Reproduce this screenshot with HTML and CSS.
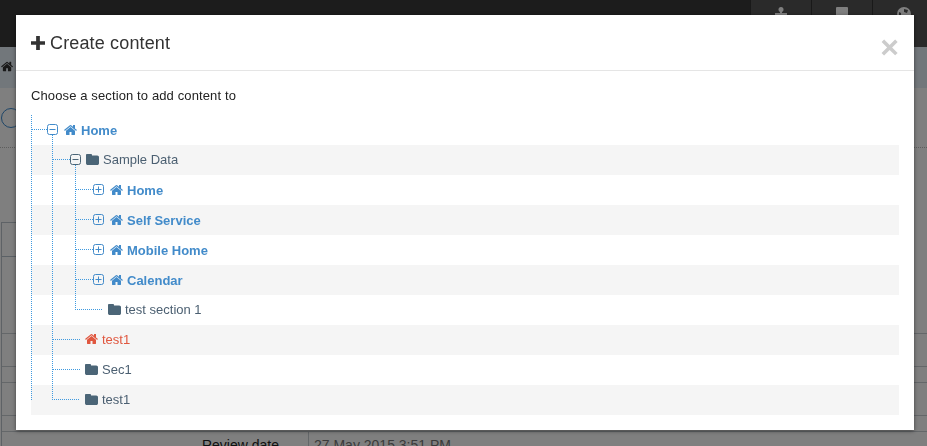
FILE: index.html
```html
<!doctype html>
<html lang="en">
  <head>
    <meta charset="UTF-8" />
    <meta name="viewport" content="width=device-width, initial-scale=1.0" />
    <title>Create content</title>
    <link rel="stylesheet" href="styles.css">
  </head>
  <body>
    <svg class="icon-defs" width="0" height="0">
      <symbol id="i-home" viewBox="0 0 1792 1792"><path d="M1408 992v480q0 26-19 45t-45 19h-384v-384h-256v384h-384q-26 0-45-19t-19-45v-480q0-1 .5-3t.5-3l575-474 575 474q1 2 1 6zm223-69l-62 74q-8 9-21 11h-3q-13 0-21-7l-692-577-692 577q-12 8-24 7-13-2-21-11l-62-74q-8-10-7-23.5t11-22.5l719-599q32-26 76-26t76 26l244 204v-195q0-14 9-23t23-9h192q14 0 23 9t9 23v408l219 182q10 8 11 21.5t-7 23.5z"/></symbol>
      <symbol id="i-folder" viewBox="64 192 1664 1344" preserveAspectRatio="none"><path d="M1728 608v704q0 92-66 158t-158 66h-1216q-92 0-158-66t-66-158v-960q0-92 66-158t158-66h320q92 0 158 66t66 158v32h672q92 0 158 66t66 158z"/></symbol>
      <symbol id="i-minus" viewBox="0 0 11 11"><rect x=".5" y=".5" width="10" height="10" rx="2" fill="none" stroke="currentColor"/><path d="M2.5 5.5h6" stroke="currentColor"/></symbol>
      <symbol id="i-plus" viewBox="0 0 11 11"><rect x=".5" y=".5" width="10" height="10" rx="2" fill="none" stroke="currentColor"/><path d="M2.5 5.5h6M5.5 2.5v6" stroke="currentColor"/></symbol>
    </svg>

    <!-- page behind the dialog -->
    <div class="page">
      <nav class="navbar">
        <div class="nav-item">
          <svg viewBox="0 0 16 16" width="16" height="16"><circle cx="8" cy="3.5" r="2.5"/><rect x="7" y="5" width="2" height="3"/><rect x="2" y="7" width="12" height="8"/></svg>
        </div>
        <div class="nav-item">
          <svg viewBox="0 0 16 16" width="16" height="16"><rect x="2" y="1" width="12" height="14" rx="1"/></svg>
        </div>
        <div class="nav-item">
          <svg viewBox="0 0 16 16" width="16" height="16"><circle cx="8" cy="8" r="7"/><path class="globe-mark" d="M8 3l4 1-1 3-3-1zM3 6l2 1v2L3 9z"/></svg>
        </div>
      </nav>
      <div class="crumbs">
        <svg class="crumb-home"><use href="#i-home"/></svg>
      </div>
      <div class="page-title"><span class="title-ring"></span></div>
      <div class="panel">
        <div class="panel-tab"></div>
        <div class="panel-row r2"></div>
        <div class="panel-row r3"></div>
        <div class="panel-row r4"></div>
        <div class="panel-row r5"></div>
        <div class="panel-row r6"></div>
        <div class="review">
          <span class="review-label">Review date</span>
          <span class="review-value">27 May 2015 3:51 PM</span>
        </div>
      </div>
    </div>

    <div class="backdrop"></div>

    <div class="modal">
      <header class="modal-header">
        <h4 class="modal-title">
          <svg class="plus-icon" viewBox="0 0 15 15"><path d="M5.5 0h4v5.5H15v4H9.5V15h-4V9.5H0v-4h5.5z"/></svg>
          Create content
        </h4>
        <span class="close">&times;</span>
      </header>
      <div class="modal-body">
        <p class="intro">Choose a section to add content to</p>
        <div class="tree">
          <svg class="tree-lines" width="120" height="300">
            <path d="M.5 0V285M.5 14.5H16M21.5 20V284.5H49M21.5 44.5H39M44.5 50V194.5H72M44.5 74.5H62M44.5 104.5H62M44.5 134.5H62M44.5 164.5H62M21.5 224.5H49M21.5 254.5H49"/>
          </svg>
          <div class="row lvl-1 link"><svg class="toggle"><use href="#i-minus"/></svg><svg class="icon"><use href="#i-home"/></svg><b>Home</b></div>
          <div class="row lvl-2 alt"><svg class="toggle dark"><use href="#i-minus"/></svg><svg class="icon folder"><use href="#i-folder"/></svg>Sample Data</div>
          <div class="row lvl-3 link"><svg class="toggle"><use href="#i-plus"/></svg><svg class="icon"><use href="#i-home"/></svg><b>Home</b></div>
          <div class="row lvl-3 link alt"><svg class="toggle"><use href="#i-plus"/></svg><svg class="icon"><use href="#i-home"/></svg><b>Self Service</b></div>
          <div class="row lvl-3 link"><svg class="toggle"><use href="#i-plus"/></svg><svg class="icon"><use href="#i-home"/></svg><b>Mobile Home</b></div>
          <div class="row lvl-3 link alt"><svg class="toggle"><use href="#i-plus"/></svg><svg class="icon"><use href="#i-home"/></svg><b>Calendar</b></div>
          <div class="row lvl-3-leaf"><svg class="icon folder"><use href="#i-folder"/></svg>test section 1</div>
          <div class="row lvl-2-leaf alt danger"><svg class="icon"><use href="#i-home"/></svg>test1</div>
          <div class="row lvl-2-leaf"><svg class="icon folder"><use href="#i-folder"/></svg>Sec1</div>
          <div class="row lvl-2-leaf alt"><svg class="icon folder"><use href="#i-folder"/></svg>test1</div>
        </div>
      </div>
    </div>
  </body>
</html>
```

FILE: styles.css
```css
* {
  margin: 0;
  padding: 0;
  box-sizing: border-box;
}

body {
  background-color: #ffffff;
  color: #333333;
  font-family: "Liberation Sans", Arial, sans-serif;
  font-size: 13px;
  height: 446px;
  overflow: hidden;
}

.icon-defs {
  position: absolute;
}

/* page behind the dialog */
.navbar {
  display: flex;
  justify-content: flex-end;
  height: 47px;
  background: #383838;
}

.nav-item {
  display: flex;
  justify-content: center;
  flex: none;
  width: 61px;
  padding-top: 6px;
  background: #555555;
  border-left: 1px solid #333;
  fill: #ffffff;
}

.nav-item:last-child {
  width: 55px;
}

.nav-item:last-child svg {
  margin-left: 8px;
}

.globe-mark {
  fill: #555555;
}

.crumbs {
  height: 41px;
  padding: 13px 0 0 1px;
  background: #e5eef6;
}

.crumb-home {
  display: block;
  width: 13px;
  height: 13px;
  fill: #333;
}

.page-title {
  height: 60px;
  padding-top: 20px;
  border-bottom: 1px dotted #bbbbbb;
}

.title-ring {
  display: block;
  width: 20px;
  height: 20px;
  margin-left: 1px;
  border: 1.5px solid #3a8ad0;
  border-radius: 50%;
}

.panel {
  margin: 74px 0 0 1px;
  border-left: 1px solid #bcc5cc;
}

.panel-tab {
  width: 200px;
  height: 35px;
  border-top: 1px solid #bcc5cc;
  border-bottom: 1px solid #b6c2cc;
}

.panel-row {
  border-bottom: 1px solid #c8ced3;
}

.r2 { height: 77px; }
.r3 { height: 33px; }
.r4 { height: 16px; }
.r5 { height: 33px; }
.r6 { height: 16px; }

.review {
  display: flex;
}

.review-label {
  width: 306px;
  padding-top: 5px;
  padding-right: 29px;
  text-align: right;
  font-size: 14px;
  color: #222;
}

.review-value {
  padding: 5px 0 0 5px;
  border-left: 1px solid #c8ced3;
  font-size: 14px;
  color: #777;
}

.backdrop {
  position: fixed;
  inset: 0;
  background: rgba(0, 0, 0, 0.5);
}

/* dialog */
.modal {
  position: fixed;
  left: 16px;
  top: 15px;
  width: 898px;
  height: 415px;
  background: #ffffff;
  box-shadow: 0 1px 4px rgba(0, 0, 0, 0.5);
}

.modal-header {
  display: flex;
  justify-content: space-between;
  height: 56px;
  padding: 15px 15px 0 15px;
  border-bottom: 1px solid #e5e5e5;
}

.modal-title {
  display: flex;
  align-items: center;
  gap: 5px;
  height: 26px;
  font-size: 18px;
  font-weight: 400;
  letter-spacing: 0.15px;
}

.plus-icon {
  width: 14px;
  height: 14px;
  fill: #333333;
}

.close {
  margin-top: 4px;
  font-size: 32px;
  line-height: 26px;
  font-weight: 700;
  color: #cccccc;
}

.modal-body {
  padding: 15px;
}

.intro {
  height: 29px;
  line-height: 19px;
  color: #222222;
  letter-spacing: 0.12px;
}

.tree {
  position: relative;
}

.tree-lines {
  position: absolute;
  left: 0;
  top: 0;
  z-index: 1;
  fill: none;
  stroke: #3f9ae0;
  stroke-dasharray: 1 1;
  shape-rendering: crispEdges;
}

.row {
  display: flex;
  align-items: center;
  height: 30px;
  padding-bottom: 2px;
  color: #4b5f71;
}

.row.link {
  padding-bottom: 0;
  color: #428bca;
}

.alt {
  background: #f5f5f5;
}

.row.danger {
  color: #e0573f;
}

.lvl-1 { padding-left: 16px; }
.lvl-2 { padding-left: 39px; }
.lvl-3 { padding-left: 62px; }
.lvl-3-leaf { padding-left: 77px; }
.lvl-2-leaf { padding-left: 54px; }

.toggle {
  position: relative;
  z-index: 2;
  width: 11px;
  height: 11px;
  margin: -1px 6px 0 0;
  color: #428bca;
}

.toggle.dark {
  margin: 1px 5px 0 0;
  color: #4b6577;
}

.icon {
  width: 14px;
  height: 14px;
  margin-right: 3px;
  fill: currentColor;
}

.danger .icon {
  margin-right: 3px;
}

.icon.folder {
  width: 13px;
  height: 11px;
  margin-right: 4px;
  fill: #4b6577;
}

b {
  font-weight: 700;
}
```
